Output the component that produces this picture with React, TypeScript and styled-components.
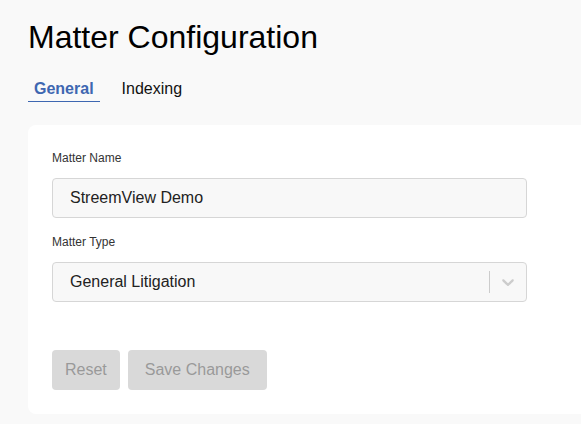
import React from "react";
import styled, { createGlobalStyle } from "styled-components";

const GlobalStyle = createGlobalStyle`
  html, body {
    margin: 0;
    padding: 0;
    background: #f9f9f9;
    font-family: "Liberation Sans", Arial, sans-serif;
    overflow: hidden;
  }
`;

const Page = styled.div`
  padding: 19px 0 0 28px;
  min-height: 424px;
  box-sizing: border-box;
`;

const Title = styled.h1`
  margin: 0;
  font-size: 32px;
  line-height: 37px;
  font-weight: 400;
  color: #000;
`;

const Tabs = styled.div`
  display: flex;
  gap: 16px;
  margin-top: 18px;
`;

const Tab = styled.div<{ $active?: boolean }>`
  padding: 6px 6px 3px;
  font-size: 16px;
  line-height: 18px;
  font-weight: ${(p) => (p.$active ? 700 : 400)};
  color: ${(p) => (p.$active ? "#3e67b1" : "#111")};
  border-bottom: 1px solid ${(p) => (p.$active ? "#3e67b1" : "transparent")};
  cursor: pointer;
`;

const Card = styled.div`
  margin-top: 23px;
  background: #fff;
  border-radius: 8px 0 0 8px;
  padding: 26px 24px 24px;
`;

const Label = styled.div<{ $first?: boolean }>`
  margin-top: ${(p) => (p.$first ? 0 : 17)}px;
  margin-bottom: 13px;
  font-size: 12px;
  line-height: 14px;
  color: #333;
`;

const Input = styled.div`
  width: 475px;
  height: 40px;
  box-sizing: border-box;
  border: 1px solid #d6d6d6;
  border-radius: 4px;
  background: #f8f8f8;
  display: flex;
  align-items: center;
  padding-left: 17px;
  font-size: 16px;
  color: #222;
`;

const SelectBox = styled(Input)`
  padding-left: 0;
`;

const SelectValue = styled.div`
  flex: 1;
  padding-left: 17px;
`;

const Separator = styled.span`
  width: 1px;
  align-self: stretch;
  margin: 8px 0;
  background: #cccccc;
`;

const Indicator = styled.div`
  width: 36px;
  display: flex;
  justify-content: center;
  align-items: center;
  color: #cccccc;
`;

const Actions = styled.div`
  display: flex;
  gap: 8px;
  margin-top: 48px;
`;

const Button = styled.button<{ $pad: number }>`
  height: 40px;
  padding: 0 ${(p) => p.$pad}px;
  border: none;
  border-radius: 4px;
  background: #d9d9d9;
  color: #999;
  font-family: "Liberation Sans", Arial, sans-serif;
  font-size: 16px;
  cursor: not-allowed;
`;

const Chevron = () => (
  <svg width="20" height="20" viewBox="0 0 20 20" fill="currentColor" aria-hidden="true">
    <path d="M4.516 7.548c0.436-0.446 1.043-0.481 1.576 0l3.908 3.747 3.908-3.747c0.533-0.481 1.141-0.446 1.574 0 0.436 0.445 0.408 1.197 0 1.615-0.406 0.418-4.695 4.502-4.695 4.502-0.217 0.223-0.502 0.335-0.787 0.335s-0.57-0.112-0.789-0.335c0 0-4.287-4.084-4.695-4.502s-0.436-1.17 0-1.615z" />
  </svg>
);

export default function App() {
  return (
    <>
      <GlobalStyle />
      <Page>
        <Title>Matter Configuration</Title>
        <Tabs>
          <Tab $active>General</Tab>
          <Tab>Indexing</Tab>
        </Tabs>
        <Card>
          <Label $first>Matter Name</Label>
          <Input>StreemView Demo</Input>
          <Label>Matter Type</Label>
          <SelectBox>
            <SelectValue>General Litigation</SelectValue>
            <Separator />
            <Indicator>
              <Chevron />
            </Indicator>
          </SelectBox>
          <Actions>
            <Button $pad={13} disabled>Reset</Button>
            <Button $pad={17} disabled>Save Changes</Button>
          </Actions>
        </Card>
      </Page>
    </>
  );
}
